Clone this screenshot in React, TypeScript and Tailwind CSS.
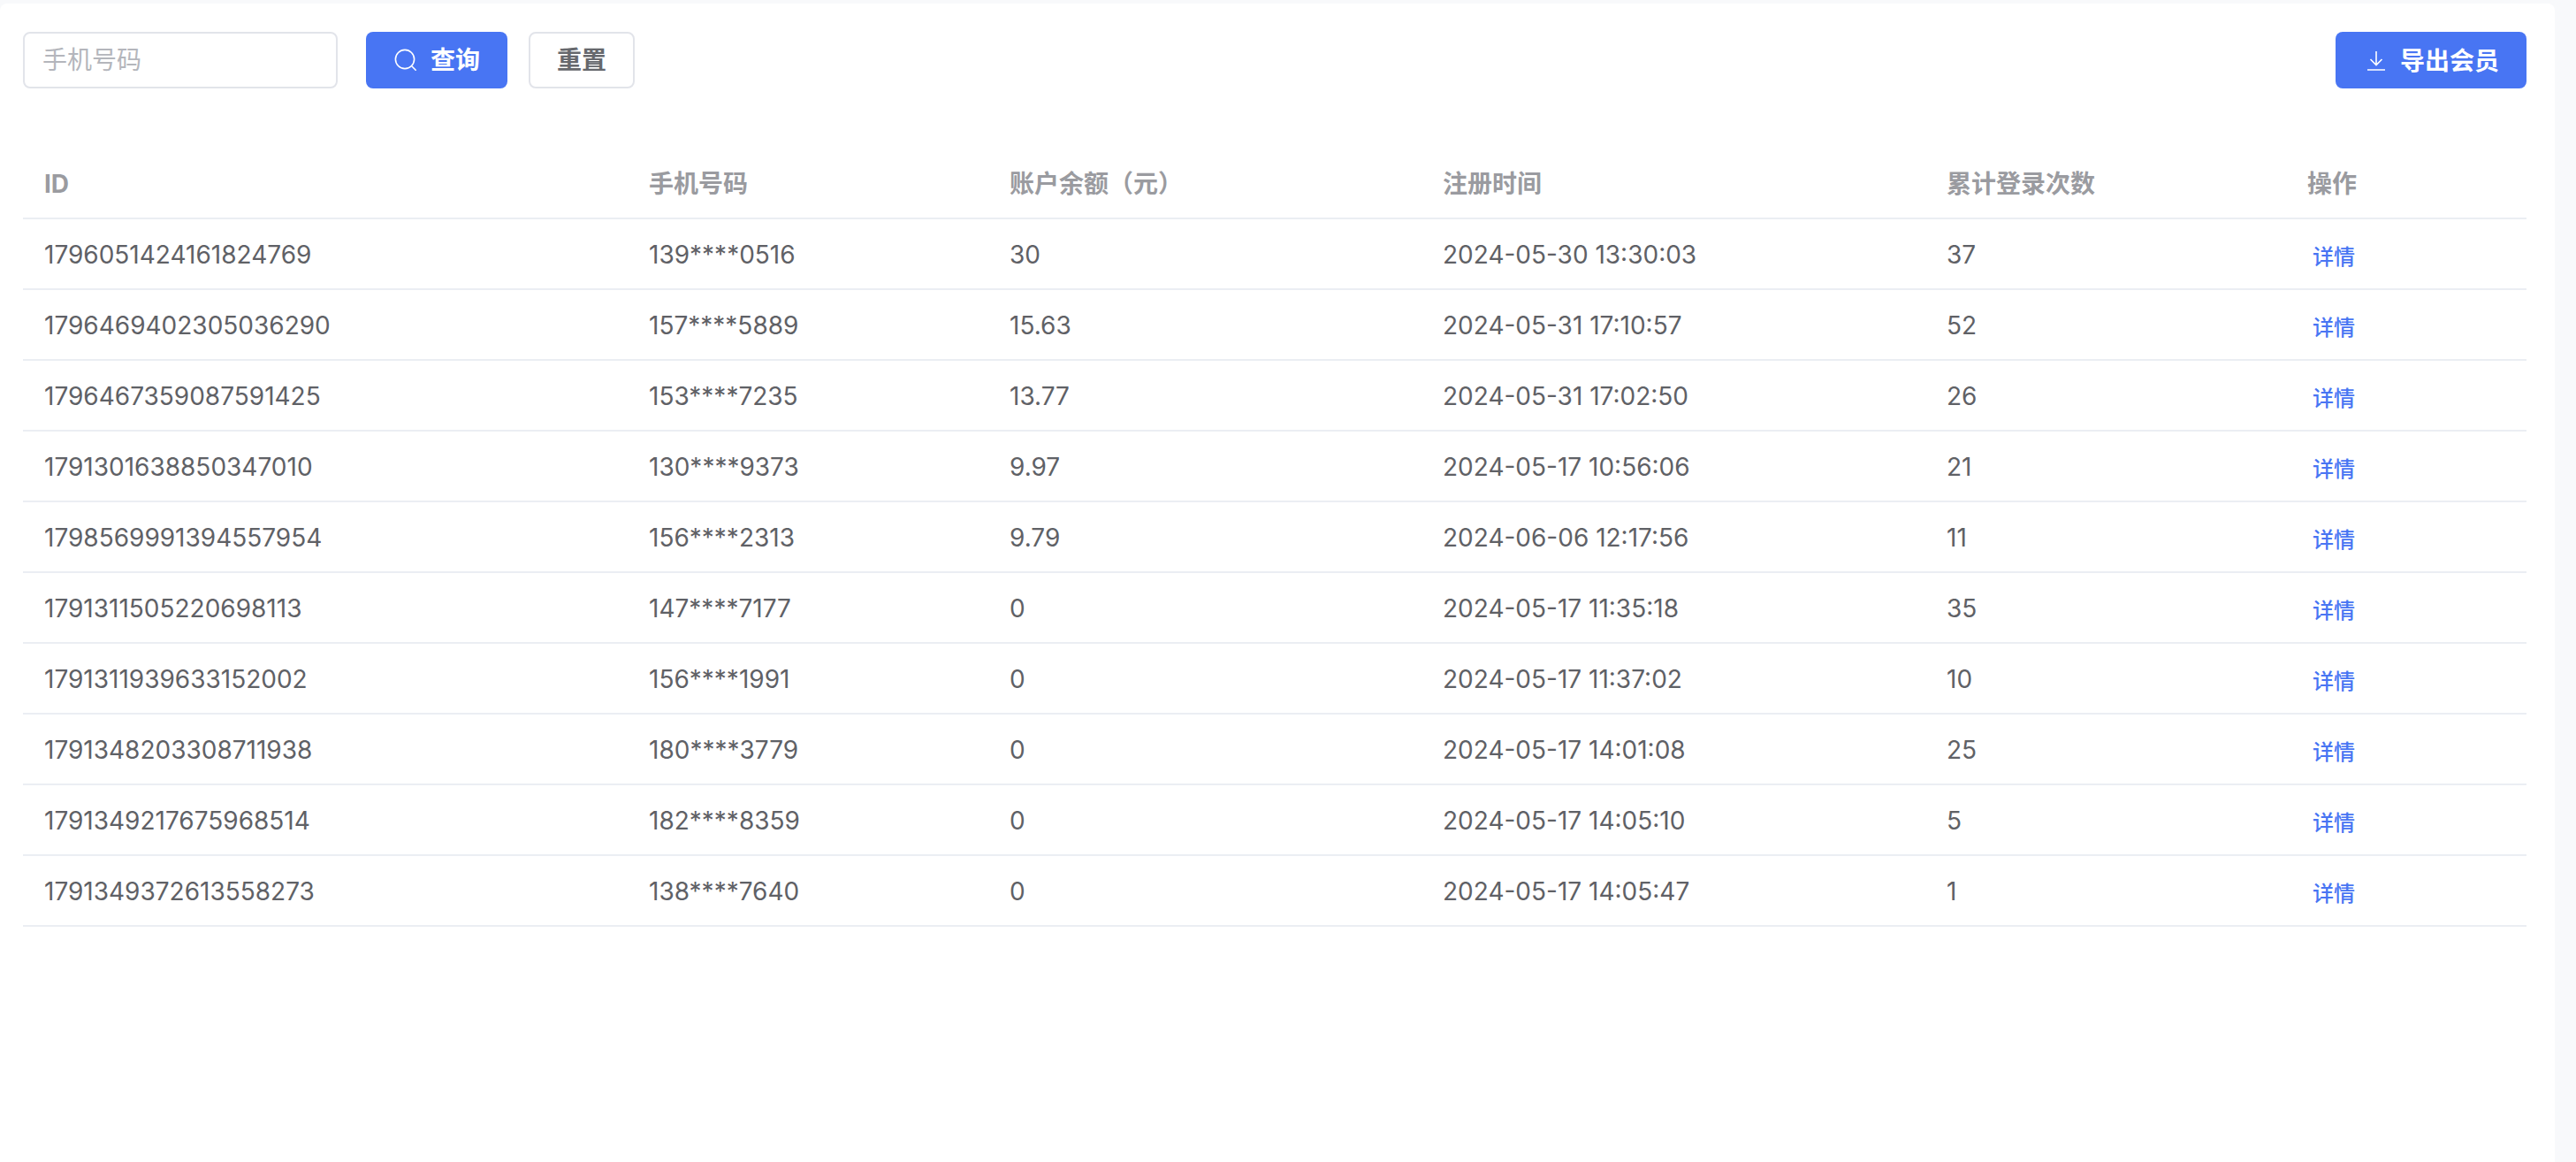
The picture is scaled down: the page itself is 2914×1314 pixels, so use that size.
const rows = [
  ["1796051424161824769", "139****0516", "30", "2024-05-30 13:30:03", "37"],
  ["1796469402305036290", "157****5889", "15.63", "2024-05-31 17:10:57", "52"],
  ["1796467359087591425", "153****7235", "13.77", "2024-05-31 17:02:50", "26"],
  ["1791301638850347010", "130****9373", "9.97", "2024-05-17 10:56:06", "21"],
  ["1798569991394557954", "156****2313", "9.79", "2024-06-06 12:17:56", "11"],
  ["1791311505220698113", "147****7177", "0", "2024-05-17 11:35:18", "35"],
  ["1791311939633152002", "156****1991", "0", "2024-05-17 11:37:02", "10"],
  ["1791348203308711938", "180****3779", "0", "2024-05-17 14:01:08", "25"],
  ["1791349217675968514", "182****8359", "0", "2024-05-17 14:05:10", "5"],
  ["1791349372613558273", "138****7640", "0", "2024-05-17 14:05:47", "1"],
];

const headers = ["ID", "手机号码", "账户余额（元）", "注册时间", "累计登录次数", "操作"];

function SearchIcon() {
  return (
    <svg width="28" height="28" viewBox="0 0 28 28" fill="none" stroke="white" strokeWidth="1.6">
      <circle cx="14" cy="13" r="10.6" />
      <path d="M22 21l4.2 4.2" strokeLinecap="round" />
    </svg>
  );
}

function DownloadIcon() {
  return (
    <svg width="28" height="28" viewBox="0 0 28 28" fill="none" stroke="white" strokeWidth="1.6">
      <path d="M14 4v15M7.500 13l6.500 6.500 6.500-6.500M4 25h20" />
    </svg>
  );
}

export default function App() {
  return (
    <main className="min-h-screen bg-[#f8f9fb] pt-1 pr-6 font-['Inter','Noto_Sans_CJK_SC',sans-serif]">
      <div className="min-h-[1310px] rounded-t-lg bg-white pr-8 pl-[26px]">
        {/* Toolbar */}
        <div className="flex items-center pt-8">
          <input
            className="h-16 w-[356px] rounded-lg border-2 border-[#e2e4ea] px-5 text-[28px] text-[#5f6166] outline-none placeholder:text-[#b4b6bc]"
            placeholder="手机号码"
          />
          <button className="ml-8 flex h-16 w-40 items-center justify-center gap-[15px] rounded-lg bg-[#4875f3] pr-[1px] text-[28px] font-semibold text-white">
            <SearchIcon />
            <span>查询</span>
          </button>
          <button className="ml-6 h-16 w-[120px] rounded-lg border-2 border-[#e2e4ea] bg-white text-[28px] font-semibold text-[#66686d]">
            重置
          </button>
          <button className="ml-auto flex h-16 w-[216px] items-center justify-center gap-[13px] rounded-lg bg-[#4875f3] pl-[1px] text-[28px] font-semibold text-white">
            <DownloadIcon />
            <span className="pt-[2px]">导出会员</span>
          </button>
        </div>

        {/* Table */}
        <table className="mt-[67px] w-full table-fixed border-collapse text-left text-[28px]">
          <colgroup>
            <col className="w-[684px]" />
            <col className="w-[408px]" />
            <col className="w-[490px]" />
            <col className="w-[570px]" />
            <col className="w-[408px]" />
            <col className="w-[272px]" />
          </colgroup>
          <thead>
            <tr className="h-20 border-b-2 border-[#ebeef3]">
              {headers.map((h) => (
                <th key={h} className="pt-[2px] pl-6 font-bold text-[#9a9ba0]">
                  {h}
                </th>
              ))}
            </tr>
          </thead>
          <tbody>
            {rows.map((row) => (
              <tr key={row[0]} className="h-20 border-b-2 border-[#ebeef3] text-[#5f6166]">
                {row.map((cell, i) => (
                  <td key={i} className="pt-[2px] pl-6">
                    {cell}
                  </td>
                ))}
                <td className="pt-1 pl-[30px]">
                  <a className="text-[24px] font-medium text-[#4875f3]">详情</a>
                </td>
              </tr>
            ))}
          </tbody>
        </table>
      </div>
    </main>
  );
}
